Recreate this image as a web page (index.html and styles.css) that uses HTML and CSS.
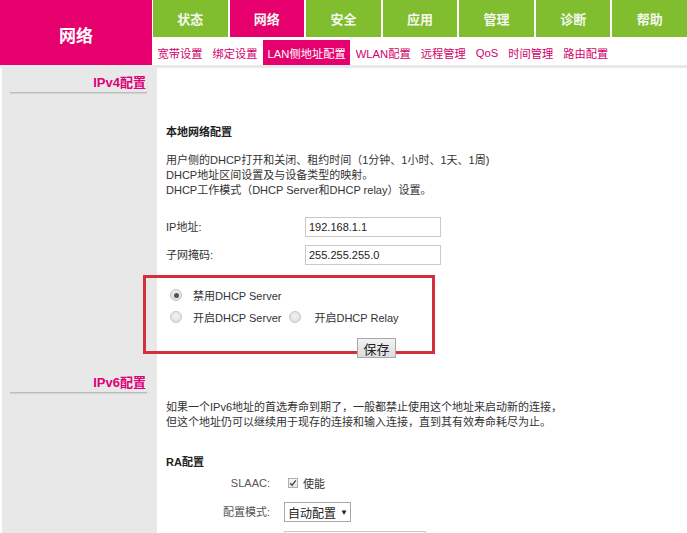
FILE: index.html
```html
<!DOCTYPE html>
<html lang="zh-CN">
<head>
<meta charset="utf-8">
<title>网络 - LAN侧地址配置</title>
<link rel="stylesheet" href="styles.css">
</head>
<body>
<div class="header">
  <div class="logo">网络</div>
  <div class="nav">
    <div class="tabs">
      <div class="tab">状态</div>
      <div class="tab active">网络</div>
      <div class="tab">安全</div>
      <div class="tab">应用</div>
      <div class="tab">管理</div>
      <div class="tab">诊断</div>
      <div class="tab">帮助</div>
    </div>
    <div class="subnav">
      <span class="sub">宽带设置</span>
      <span class="sub">绑定设置</span>
      <span class="sub active">LAN侧地址配置</span>
      <span class="sub">WLAN配置</span>
      <span class="sub">远程管理</span>
      <span class="sub">QoS</span>
      <span class="sub">时间管理</span>
      <span class="sub">路由配置</span>
    </div>
  </div>
</div>
<div class="band"></div>

<div class="section ipv4">
  <div class="side"><div class="side-title">IPv4配置</div></div>
  <div class="content">
    <div class="h">本地网络配置</div>
    <div class="desc">
      <div>用户侧的DHCP打开和关闭、租约时间（1分钟、1小时、1天、1周)</div>
      <div>DHCP地址区间设置及与设备类型的映射。</div>
      <div>DHCP工作模式（DHCP Server和DHCP relay）设置。</div>
    </div>
    <div class="form">
      <div class="lbl">IP地址:</div>
      <div class="field">192.168.1.1</div>
      <div class="lbl">子网掩码:</div>
      <div class="field">255.255.255.0</div>
    </div>
    <div class="radios">
      <div class="rrow"><span class="radio checked"></span><span class="rtext">禁用DHCP Server</span></div>
      <div class="rrow"><span class="radio"></span><span class="rtext">开启DHCP Server</span><span class="radio second"></span><span class="rtext">开启DHCP Relay</span></div>
    </div>
    <div class="btnrow"><span class="btn">保存</span></div>
  </div>
</div>

<div class="section ipv6">
  <div class="side"><div class="side-title">IPv6配置</div></div>
  <div class="content">
    <div class="desc first">
      <div>如果一个IPv6地址的首选寿命到期了，一般都禁止使用这个地址来启动新的连接，</div>
      <div>但这个地址仍可以继续用于现存的连接和输入连接，直到其有效寿命耗尽为止。</div>
    </div>
    <div class="h ra">RA配置</div>
    <div class="raform">
      <div class="rlbl">SLAAC:</div>
      <div class="chkwrap"><span class="chk"><svg width="8" height="8" viewBox="0 0 8 8"><path d="M1.2 4.2 L3.1 6.2 L6.8 1.4" fill="none" stroke="#444" stroke-width="1.3"/></svg></span><span>使能</span></div>
      <div class="rlbl">配置模式:</div>
      <div><span class="select">自动配置 <span class="arrow">▼</span></span></div>
      <div class="rlbl"></div>
      <div><span class="field wide"></span></div>
    </div>
  </div>
</div>

<div class="redbox"></div>
</body>
</html>
```

FILE: styles.css
```css
body {
  margin: 0;
  width: 687px;
  height: 533px;
  overflow: hidden;
  position: relative;
  background: #fff;
  color: #333;
  font-family: "Liberation Sans", "Noto Sans CJK SC", sans-serif;
  font-size: 11px;
}

.header {
  display: flex;
  height: 65px;
}

.logo {
  width: 152px;
  flex: none;
  background: #e5006e;
  color: #fff;
  font-family: "Noto Sans CJK SC", sans-serif;
  font-size: 17px;
  font-weight: bold;
  display: flex;
  align-items: center;
  justify-content: center;
  padding-top: 3px;
  box-sizing: border-box;
}

.nav {
  flex: 1;
  margin-left: 1px;
  display: flex;
  flex-direction: column;
}

.tabs {
  display: flex;
  gap: 2px;
  height: 37px;
}

.tab {
  flex: 1;
  background: #80bd2f;
  color: #f4f8ee;
  font-family: "Noto Sans CJK SC", sans-serif;
  font-size: 13px;
  font-weight: bold;
  display: flex;
  align-items: center;
  justify-content: center;
}

.tab.active {
  background: #e5006e;
}

.subnav {
  height: 25px;
  margin-top: 3px;
  display: flex;
}

.sub {
  padding: 0 4.5px;
  margin-right: 1px;
  color: #d2006c;
  font-size: 11.25px;
  display: flex;
  align-items: center;
}

.sub.active {
  background: #e5006e;
  color: #fff;
}

.band {
  height: 3px;
  background: #e9e9e9;
}

.section {
  display: flex;
  margin-left: 2px;
}

.side {
  width: 155px;
  flex: none;
  background: #e8e8e8;
  padding-top: 6px;
}

.side-title {
  margin: 0 10px 0 8px;
  padding-right: 1px;
  text-align: right;
  line-height: 18px;
  font-size: 13px;
  font-weight: bold;
  color: #de0078;
  border-bottom: 1px solid #bcbcbc;
  box-shadow: 0 1px 1px rgba(0, 0, 0, 0.08);
}

.content {
  flex: 1;
  padding-left: 9px;
}

.ipv4 .content {
  padding-top: 57px;
  padding-bottom: 10px;
}

.h {
  font-weight: bold;
  line-height: 15px;
  color: #222;
}

.desc {
  margin-top: 13px;
  line-height: 15px;
  color: #333;
}

.form {
  margin-top: 19px;
  display: grid;
  grid-template-columns: 139px 136px;
  row-gap: 8px;
  align-items: center;
}

.lbl {
  line-height: 20px;
  color: #333;
}

.field {
  display: block;
  height: 20px;
  box-sizing: border-box;
  border: 1px solid #c9c9c9;
  padding-left: 3px;
  line-height: 18px;
  color: #222;
  background: #fff;
}

.field.wide {
  width: 142px;
}

.radios {
  margin-top: 19px;
}

.rrow {
  height: 22px;
  display: flex;
  align-items: center;
  padding-left: 4px;
}

.radio {
  width: 12px;
  height: 12px;
  box-sizing: border-box;
  border-radius: 50%;
  border: 1px solid #c6c6c6;
  background: radial-gradient(circle at 50% 40%, #f2f2f2 0, #dadada 100%);
  margin-right: 11px;
  display: inline-flex;
  align-items: center;
  justify-content: center;
}

.radio.checked::after {
  content: "";
  width: 5px;
  height: 5px;
  border-radius: 50%;
  background: #555;
}

.radio.second {
  margin-left: 8px;
  margin-right: 13px;
}

.btnrow {
  margin-top: 10px;
  padding-left: 191px;
  height: 20px;
}

.btn {
  position: relative;
  z-index: 2;
  display: inline-flex;
  align-items: center;
  justify-content: center;
  width: 39px;
  height: 20px;
  box-sizing: border-box;
  border: 1px solid #a8a8a8;
  background: linear-gradient(#f3f3f3, #dcdcdc);
  font-family: "Noto Sans CJK SC", sans-serif;
  font-size: 13px;
  color: #222;
}

.ipv6 {
  height: 170px;
}

.ipv6 .content {
  padding-top: 32px;
}

.desc.first {
  margin-top: 0;
}

.ra {
  margin-top: 25px;
}

.raform {
  margin-top: 3px;
  display: grid;
  grid-template-columns: 104px 160px;
  column-gap: 14px;
  row-gap: 9px;
  align-items: center;
}

.rlbl {
  text-align: right;
  line-height: 20px;
  color: #555;
}

.chkwrap {
  display: flex;
  align-items: center;
  padding-left: 4px;
  height: 20px;
  color: #333;
}

.chk {
  width: 10px;
  height: 10px;
  box-sizing: border-box;
  border: 1px solid #b0b0b0;
  background: linear-gradient(#f6f6f6, #e2e2e2);
  margin-right: 5px;
  display: inline-flex;
  align-items: center;
  justify-content: center;
}

.select {
  display: inline-flex;
  align-items: center;
  width: 67px;
  height: 20px;
  box-sizing: border-box;
  border: 1px solid #a9a9a9;
  padding-left: 3px;
  font-size: 12px;
  color: #222;
  background: #fff;
}

.arrow {
  font-size: 8px;
  margin-left: 4px;
}

.redbox {
  position: absolute;
  left: 143px;
  top: 275px;
  width: 292px;
  height: 79px;
  box-sizing: border-box;
  border: 3px solid #d32f3f;
  z-index: 1;
}
```
